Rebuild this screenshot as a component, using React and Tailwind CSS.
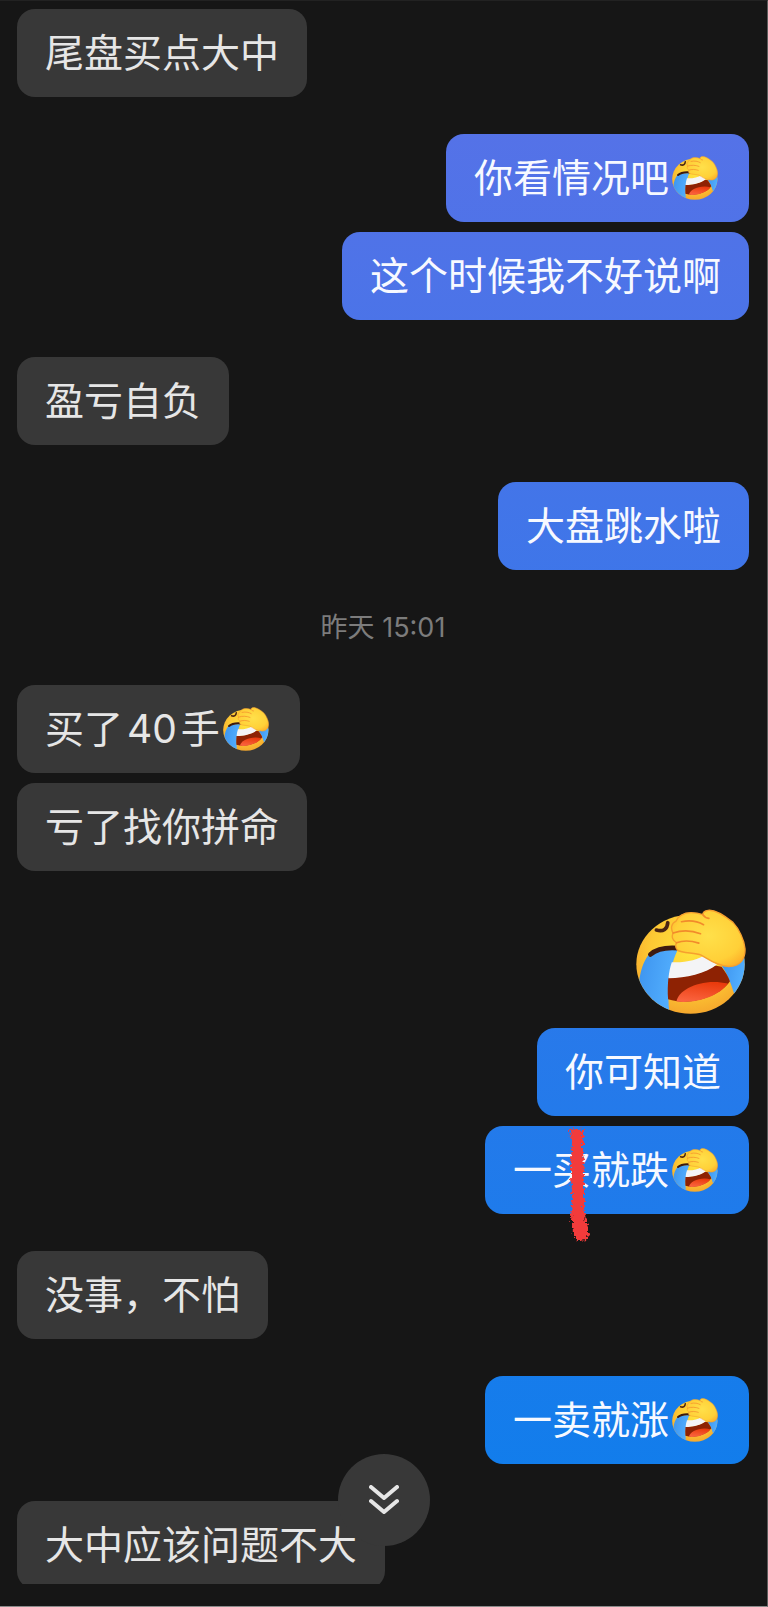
import React from "react";

const groups = [
  { from: "them", items: [{ text: "尾盘买点大中" }] },
  {
    from: "me",
    items: [{ text: "你看情况吧", emoji: true }, { text: "这个时候我不好说啊" }],
  },
  { from: "them", items: [{ text: "盈亏自负" }] },
  { from: "me", items: [{ text: "大盘跳水啦" }] },
  { time: "昨天 15:01" },
  {
    from: "them",
    items: [
      { text: "买了", number: "40", tail: "手", emoji: true },
      { text: "亏了找你拼命" },
    ],
  },
  {
    from: "me",
    items: [
      { sticker: true },
      { text: "你可知道" },
      { text: "一买就跌", emoji: true, marked: true },
    ],
  },
  { from: "them", items: [{ text: "没事，不怕" }] },
  { from: "me", items: [{ text: "一卖就涨", emoji: true }] },
  { from: "them", items: [{ text: "大中应该问题不大" }] },
];

function EmojiDefs() {
  return (
    <svg className="absolute h-0 w-0" aria-hidden="true">
      <defs>
        <radialGradient id="face" cx="0.5" cy="0.4" r="0.62">
          <stop offset="0" stopColor="#ffe43d" />
          <stop offset="0.6" stopColor="#fdc934" />
          <stop offset="1" stopColor="#f5a52c" />
        </radialGradient>
        <radialGradient id="hand" cx="0.5" cy="0.45" r="0.65">
          <stop offset="0" stopColor="#ffe04a" />
          <stop offset="0.7" stopColor="#ffd038" />
          <stop offset="1" stopColor="#fdae28" />
        </radialGradient>
        <linearGradient id="tear" x1="0" y1="0" x2="1" y2="0.3">
          <stop offset="0" stopColor="#3d93ee" />
          <stop offset="1" stopColor="#53b0ff" />
        </linearGradient>
        <linearGradient id="tongue" x1="0.6" y1="0" x2="0.3" y2="1">
          <stop offset="0" stopColor="#e93a0c" />
          <stop offset="1" stopColor="#fb6440" />
        </linearGradient>
        <clipPath id="head">
          <ellipse cx="213" cy="222" rx="162" ry="148" />
        </clipPath>
      </defs>
    </svg>
  );
}

function FacepalmEmoji({ className }) {
  return (
    <svg viewBox="50 57 329 314" className={className} role="img" aria-label="捂脸">
      <g clipPath="url(#head)">
        <rect x="50" y="57" width="329" height="314" fill="url(#face)" />
        {/* tears */}
        <path
          d="M86 196C112 180 145 178 174 180C152 225 140 300 151 375L60 375L60 270C64 240 72 215 86 196Z"
          fill="url(#tear)"
        />
        <path d="M306 226L380 200L380 270L344 312C335 280 322 250 306 226Z" fill="url(#tear)" />
        {/* mouth */}
        <path
          d="M147 262C200 262 250 250 286 226L306 230C318 246 326 260 331 273C300 318 215 348 146 327C144 305 145 284 147 262Z"
          fill="#8e2203"
        />
        <path d="M171 334C176 296 250 262 325 280C298 318 232 340 171 334Z" fill="url(#tongue)" />
        <path
          d="M157 216C200 218 235 208 262 192C272 204 284 214 292 223C258 250 200 264 147 264C149 246 152 230 157 216Z"
          fill="#f4f4f6"
        />
      </g>
      <path
        d="M93 193C112 176 140 171 176 174"
        fill="none"
        stroke="#3d1a10"
        strokeWidth="14"
        strokeLinecap="round"
      />
      <path
        d="M111 120C132 126 144 116 145 98"
        fill="none"
        stroke="#4a2413"
        strokeWidth="11"
        strokeLinecap="round"
      />
      <path
        d="M174 180C188 190 226 187 245 195C266 206 288 227 328 229C363 229 378 204 376 175C374 150 358 116 340 97C310 73 285 59 266 61C255 62 250 68 250 74C225 65 200 66 188 74C178 79 173 86 170 93C155 99 153 116 161 129C155 140 160 152 171 158C167 167 169 175 174 180Z"
        fill="url(#hand)"
        stroke="#f6a02f"
        strokeWidth="4"
        strokeLinejoin="round"
      />
      <path
        d="M186 95C212 90 235 94 252 104M161 129C188 119 220 122 243 131M171 158C192 150 216 152 238 159M250 74C254 80 260 84 268 85"
        fill="none"
        stroke="#f28b2b"
        strokeWidth="5"
        strokeLinecap="round"
      />
    </svg>
  );
}

// red crayon stroke drawn over a message
function CrayonMark() {
  return (
    <svg
      viewBox="0 0 24 118"
      className="pointer-events-none absolute top-0 left-[83px] h-[118px] w-6"
      aria-hidden="true"
    >
      <filter id="crayon" x="-30%" y="-5%" width="160%" height="110%">
        <feTurbulence type="fractalNoise" baseFrequency="0.4" numOctaves="2" seed="7" />
        <feDisplacementMap
          in="SourceGraphic"
          scale="8"
          xChannelSelector="R"
          yChannelSelector="G"
        />
      </filter>
      <path
        d="M2 3L15 4L15 20L16 50L16 80L18 96L21 104L20 114L9 115L5 106L3 92L4 70L3 50L3 34L4 18Z"
        fill="#f23b3a"
        filter="url(#crayon)"
      />
    </svg>
  );
}

function Bubble({ item, mine }) {
  if (item.sticker) {
    return (
      <div className="pt-px pr-[3px] pb-1">
        <FacepalmEmoji className="h-[105px] w-[110px]" />
      </div>
    );
  }

  return (
    <div
      className={`relative flex items-center rounded-[18px] px-7 py-4 text-[39px] leading-14 whitespace-nowrap ${
        mine
          ? "bg-linear-to-b/srgb from-[#5b71e7] to-[#0b7eec] bg-fixed text-[#f7f9ff]"
          : "bg-[#383838] text-[#e6e6e6]"
      }`}
    >
      <p>
        {item.text}
        {item.number && <span className="mx-1">{item.number}</span>}
        {item.tail}
      </p>
      {item.emoji && <FacepalmEmoji className="mx-[3px] h-11 w-[46px]" />}
      {item.marked && <CrayonMark />}
    </div>
  );
}

export default function App() {
  return (
    <div
      lang="zh-CN"
      className="flex h-screen flex-col border-t border-r border-b border-t-[#222222] border-r-[#5c5c5c] border-b-[#8a8a8a] bg-[#161616] font-['Inter','Noto_Sans_CJK_SC',sans-serif]"
    >
      <EmojiDefs />

      <main className="relative min-h-0 flex-1 overflow-hidden">
        <div className="flex flex-col gap-[37px] pt-2 pr-[18px] pl-[17px]">
          {groups.map((group, index) =>
            group.time ? (
              <time
                key={index}
                className="text-center text-[27px] leading-[41px] text-[#7c7c7c]"
              >
                {group.time}
              </time>
            ) : (
              <div
                key={index}
                className={`flex flex-col gap-2.5 ${
                  group.from === "me" ? "items-end" : "items-start"
                }`}
              >
                {group.items.map((item, i) => (
                  <Bubble key={i} item={item} mine={group.from === "me"} />
                ))}
              </div>
            )
          )}
        </div>

        {/* Jump to latest */}
        <button
          type="button"
          aria-label="回到底部"
          className="absolute bottom-[38px] left-1/2 flex size-[92px] -translate-x-1/2 items-center justify-center rounded-full bg-[#383838] text-[#e6e6e6]"
        >
          <svg
            viewBox="0 0 30 30"
            className="size-[30px]"
            fill="none"
            stroke="currentColor"
            strokeWidth="4"
            strokeLinecap="round"
            strokeLinejoin="round"
          >
            <path d="M2 2L15 13L28 2M2 16L15 27L28 16" />
          </svg>
        </button>
      </main>

      <footer className="h-[22px] shrink-0" />
    </div>
  );
}
